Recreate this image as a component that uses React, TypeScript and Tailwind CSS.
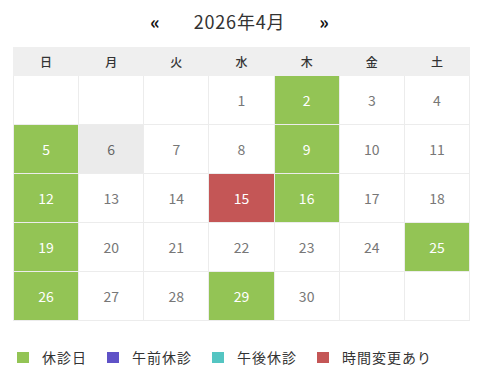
const weekdays = ['日', '月', '火', '水', '木', '金', '土'];

type Kind = 'off' | 'am' | 'pm' | 'change' | 'today' | undefined;

const marks: Record<number, Kind> = {
  2: 'off',
  5: 'off',
  6: 'today',
  9: 'off',
  12: 'off',
  15: 'change',
  16: 'off',
  19: 'off',
  25: 'off',
  26: 'off',
  29: 'off',
};

const cellColor: Record<string, string> = {
  off: 'bg-[#93c455] text-white',
  am: 'bg-[#5f52c7] text-white',
  pm: 'bg-[#54c5c2] text-white',
  change: 'bg-[#c45656] text-white',
  today: 'bg-[#ebebeb] text-[#666]',
};

const legend = [
  { label: '休診日', color: 'bg-[#93c455]' },
  { label: '午前休診', color: 'bg-[#5f52c7]' },
  { label: '午後休診', color: 'bg-[#54c5c2]' },
  { label: '時間変更あり', color: 'bg-[#c45656]' },
];

export default function App() {
  // April 2026 starts on a Wednesday
  const cells: (number | null)[] = [null, null, null];
  for (let d = 1; d <= 30; d++) cells.push(d);
  while (cells.length % 7) cells.push(null);
  const weeks: (number | null)[][] = [];
  for (let i = 0; i < cells.length; i += 7) weeks.push(cells.slice(i, i + 7));

  return (
    <div
      className="w-[479px] h-[370px] bg-white"
      style={{ fontFamily: '"Noto Sans CJK JP", "Noto Sans", sans-serif' }}
    >
      <div className="flex h-[47px] items-start justify-center pt-[7px]">
        <button type="button" className="text-[18px] font-bold leading-[28px] text-[#111]">«</button>
        <h2 className="mx-[34px] text-[18px] font-normal leading-[28px] tracking-[0.8px] text-[#333]">2026年4月</h2>
        <button type="button" className="text-[18px] font-bold leading-[28px] text-[#111]">»</button>
      </div>

      <table className="ml-[13px] w-[457px] table-fixed border-collapse">
        <thead>
          <tr className="h-[28px] bg-[#efefef]">
            {weekdays.map((w) => (
              <th key={w} className="border border-[#efefef] text-[12px] font-medium text-[#333]">
                {w}
              </th>
            ))}
          </tr>
        </thead>
        <tbody>
          {weeks.map((week, i) => (
            <tr key={i} className="h-[49px]">
              {week.map((d, j) => {
                const kind = d ? marks[d] : undefined;
                return (
                  <td
                    key={j}
                    className={`border border-[#ececec] text-center text-[14px] ${
                      kind ? cellColor[kind] : 'text-[#777]'
                    }`}
                  >
                    {d ?? ''}
                  </td>
                );
              })}
            </tr>
          ))}
        </tbody>
      </table>

      <div className="mt-[26px] flex items-center pl-[17px]">
        {legend.map((l) => (
          <div key={l.label} className="mr-[20px] flex items-center">
            <span className={`h-[11px] w-[12px] ${l.color}`} />
            <span className="ml-[13px] text-[14px] leading-[20px] tracking-[1px] text-[#333]">{l.label}</span>
          </div>
        ))}
      </div>
    </div>
  );
}
